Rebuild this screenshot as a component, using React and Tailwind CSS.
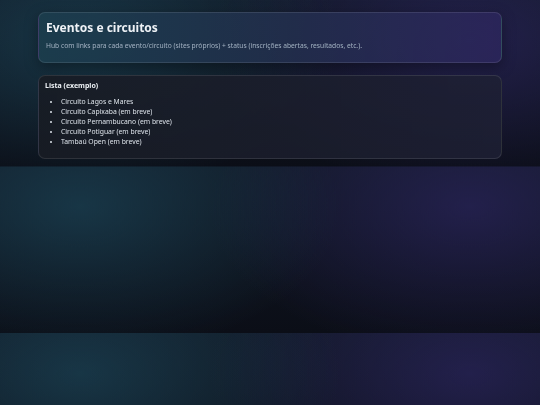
export default function App() {
  const items = [
    "Circuito Lagos e Mares",
    "Circuito Capixaba (em breve)",
    "Circuito Pernambucano (em breve)",
    "Circuito Potiguar (em breve)",
    "Tambaú Open (em breve)",
  ];
  return (
    <div
      className="min-h-screen w-full bg-[#0b0e17] bg-[radial-gradient(ellipse_260px_150px_at_80px_40px,rgba(30,80,100,0.55),transparent),radial-gradient(ellipse_260px_150px_at_470px_40px,rgba(50,40,110,0.55),transparent),linear-gradient(180deg,#111824,#0b0e17)] bg-[length:100%_166.5px] bg-repeat"
      style={{ fontFamily: '"Noto Sans", sans-serif' }}
    >
      <div className="px-[38px] pt-[12px] pb-[8px] flex flex-col gap-[12px] antialiased [will-change:transform]">
        <div className="rounded-[7px] border border-white/10 bg-[linear-gradient(90deg,rgba(28,62,78,0.85),rgba(36,48,80,0.8)_55%,rgba(44,38,92,0.85))] shadow-[0_4px_14px_rgba(0,0,0,0.35)] px-[7px] pt-[7px] pb-[12px]">
          <h1 className="text-[12px] font-bold text-[#eef2f6] leading-[16px]">Eventos e circuitos</h1>
          <p className="text-[6.7px] text-[#a3b2c2] mt-[5px] leading-[9px]">
            Hub com links para cada evento/circuito (sites próprios) + status (inscrições abertas, resultados, etc.).
          </p>
        </div>
        <div className="rounded-[7px] border border-white/10 bg-[linear-gradient(90deg,rgba(24,28,36,0.9),rgba(30,32,52,0.85))] px-[6px] pt-[5px] pb-[11px]">
          <div className="text-[7px] font-bold text-[#eef2f6] leading-[10px]">Lista (exemplo)</div>
          <ul className="mt-[6px] pl-[16px] list-disc text-[6.8px] text-[#dde3ea] leading-[10px] marker:text-[#dde3ea]">
            {items.map((t) => (
              <li key={t}>{t}</li>
            ))}
          </ul>
        </div>
      </div>
    </div>
  );
}
